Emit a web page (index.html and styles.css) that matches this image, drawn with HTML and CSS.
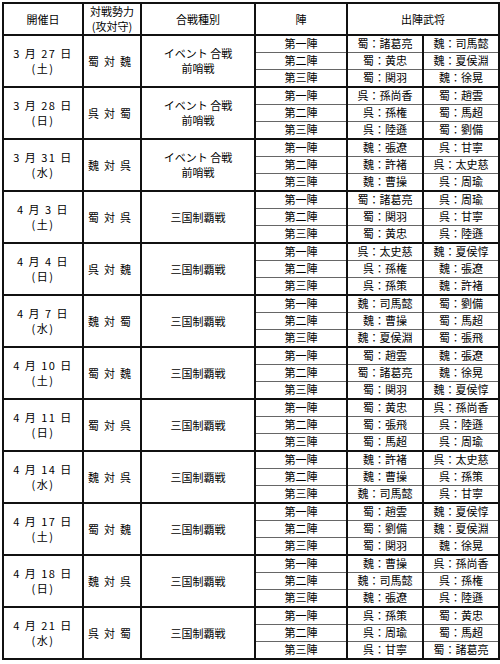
FILE: index.html
```html
<!DOCTYPE html>
<html lang="ja">
<head>
<meta charset="utf-8">
<title>出陣表</title>
<link rel="stylesheet" href="styles.css">
</head>
<body>
<table class="sched">
<colgroup><col class="c1"><col class="c2"><col class="c3"><col class="c4"><col class="c5"><col class="c6"></colgroup>
<thead>
<tr class="head"><th>開催日</th><th>対戦勢力<br>(攻対守)</th><th>合戦種別</th><th>陣</th><th colspan="2">出陣武将</th></tr>
</thead>
<tbody>
<tr class="r1"><td rowspan="3" class="date">3 月 27 日<br>(土)</td><td rowspan="3" class="vs">蜀対魏</td><td rowspan="3" class="kind">イベント 合戦<br>前哨戦</td><td class="jin">第一陣</td><td class="nm">蜀：諸葛亮</td><td class="nm">魏：司馬懿</td></tr>
<tr class="r2"><td class="jin">第二陣</td><td class="nm">蜀：黄忠</td><td class="nm">魏：夏侯淵</td></tr>
<tr class="r3"><td class="jin">第三陣</td><td class="nm">蜀：関羽</td><td class="nm">魏：徐晃</td></tr>

<tr class="r1"><td rowspan="3" class="date">3 月 28 日<br>(日)</td><td rowspan="3" class="vs">呉対蜀</td><td rowspan="3" class="kind">イベント 合戦<br>前哨戦</td><td class="jin">第一陣</td><td class="nm">呉：孫尚香</td><td class="nm">蜀：趙雲</td></tr>
<tr class="r2"><td class="jin">第二陣</td><td class="nm">呉：孫権</td><td class="nm">蜀：馬超</td></tr>
<tr class="r3"><td class="jin">第三陣</td><td class="nm">呉：陸遜</td><td class="nm">蜀：劉備</td></tr>

<tr class="r1"><td rowspan="3" class="date">3 月 31 日<br>(水)</td><td rowspan="3" class="vs">魏対呉</td><td rowspan="3" class="kind">イベント 合戦<br>前哨戦</td><td class="jin">第一陣</td><td class="nm">魏：張遼</td><td class="nm">呉：甘寧</td></tr>
<tr class="r2"><td class="jin">第二陣</td><td class="nm">魏：許褚</td><td class="nm">呉：太史慈</td></tr>
<tr class="r3"><td class="jin">第三陣</td><td class="nm">魏：曹操</td><td class="nm">呉：周瑜</td></tr>

<tr class="r1"><td rowspan="3" class="date">4 月 3 日<br>(土)</td><td rowspan="3" class="vs">蜀対呉</td><td rowspan="3" class="kind">三国制覇戦</td><td class="jin">第一陣</td><td class="nm">蜀：諸葛亮</td><td class="nm">呉：周瑜</td></tr>
<tr class="r2"><td class="jin">第二陣</td><td class="nm">蜀：関羽</td><td class="nm">呉：甘寧</td></tr>
<tr class="r3"><td class="jin">第三陣</td><td class="nm">蜀：黄忠</td><td class="nm">呉：陸遜</td></tr>

<tr class="r1"><td rowspan="3" class="date">4 月 4 日<br>(日)</td><td rowspan="3" class="vs">呉対魏</td><td rowspan="3" class="kind">三国制覇戦</td><td class="jin">第一陣</td><td class="nm">呉：太史慈</td><td class="nm">魏：夏侯惇</td></tr>
<tr class="r2"><td class="jin">第二陣</td><td class="nm">呉：孫権</td><td class="nm">魏：張遼</td></tr>
<tr class="r3"><td class="jin">第三陣</td><td class="nm">呉：孫策</td><td class="nm">魏：許褚</td></tr>

<tr class="r1"><td rowspan="3" class="date">4 月 7 日<br>(水)</td><td rowspan="3" class="vs">魏対蜀</td><td rowspan="3" class="kind">三国制覇戦</td><td class="jin">第一陣</td><td class="nm">魏：司馬懿</td><td class="nm">蜀：劉備</td></tr>
<tr class="r2"><td class="jin">第二陣</td><td class="nm">魏：曹操</td><td class="nm">蜀：馬超</td></tr>
<tr class="r3"><td class="jin">第三陣</td><td class="nm">魏：夏侯淵</td><td class="nm">蜀：張飛</td></tr>

<tr class="r1"><td rowspan="3" class="date">4 月 10 日<br>(土)</td><td rowspan="3" class="vs">蜀対魏</td><td rowspan="3" class="kind">三国制覇戦</td><td class="jin">第一陣</td><td class="nm">蜀：趙雲</td><td class="nm">魏：張遼</td></tr>
<tr class="r2"><td class="jin">第二陣</td><td class="nm">蜀：諸葛亮</td><td class="nm">魏：徐晃</td></tr>
<tr class="r3"><td class="jin">第三陣</td><td class="nm">蜀：関羽</td><td class="nm">魏：夏侯惇</td></tr>

<tr class="r1"><td rowspan="3" class="date">4 月 11 日<br>(日)</td><td rowspan="3" class="vs">蜀対呉</td><td rowspan="3" class="kind">三国制覇戦</td><td class="jin">第一陣</td><td class="nm">蜀：黄忠</td><td class="nm">呉：孫尚香</td></tr>
<tr class="r2"><td class="jin">第二陣</td><td class="nm">蜀：張飛</td><td class="nm">呉：陸遜</td></tr>
<tr class="r3"><td class="jin">第三陣</td><td class="nm">蜀：馬超</td><td class="nm">呉：周瑜</td></tr>

<tr class="r1"><td rowspan="3" class="date">4 月 14 日<br>(水)</td><td rowspan="3" class="vs">魏対呉</td><td rowspan="3" class="kind">三国制覇戦</td><td class="jin">第一陣</td><td class="nm">魏：許褚</td><td class="nm">呉：太史慈</td></tr>
<tr class="r2"><td class="jin">第二陣</td><td class="nm">魏：曹操</td><td class="nm">呉：孫策</td></tr>
<tr class="r3"><td class="jin">第三陣</td><td class="nm">魏：司馬懿</td><td class="nm">呉：甘寧</td></tr>

<tr class="r1"><td rowspan="3" class="date">4 月 17 日<br>(土)</td><td rowspan="3" class="vs">蜀対魏</td><td rowspan="3" class="kind">三国制覇戦</td><td class="jin">第一陣</td><td class="nm">蜀：趙雲</td><td class="nm">魏：夏侯惇</td></tr>
<tr class="r2"><td class="jin">第二陣</td><td class="nm">蜀：劉備</td><td class="nm">魏：夏侯淵</td></tr>
<tr class="r3"><td class="jin">第三陣</td><td class="nm">蜀：関羽</td><td class="nm">魏：徐晃</td></tr>

<tr class="r1"><td rowspan="3" class="date">4 月 18 日<br>(日)</td><td rowspan="3" class="vs">魏対呉</td><td rowspan="3" class="kind">三国制覇戦</td><td class="jin">第一陣</td><td class="nm">魏：曹操</td><td class="nm">呉：孫尚香</td></tr>
<tr class="r2"><td class="jin">第二陣</td><td class="nm">魏：司馬懿</td><td class="nm">呉：孫権</td></tr>
<tr class="r3"><td class="jin">第三陣</td><td class="nm">魏：張遼</td><td class="nm">呉：陸遜</td></tr>

<tr class="r1"><td rowspan="3" class="date">4 月 21 日<br>(水)</td><td rowspan="3" class="vs">呉対蜀</td><td rowspan="3" class="kind">三国制覇戦</td><td class="jin">第一陣</td><td class="nm">呉：孫策</td><td class="nm">蜀：黄忠</td></tr>
<tr class="r2"><td class="jin">第二陣</td><td class="nm">呉：周瑜</td><td class="nm">蜀：馬超</td></tr>
<tr class="r3"><td class="jin">第三陣</td><td class="nm">呉：甘寧</td><td class="nm">蜀：諸葛亮</td></tr>
</tbody>
</table>
</body>
</html>
```
FILE: styles.css
```css
html, body {
  margin: 0;
  padding: 0;
  background: #fff;
}
body {
  padding: 2px 0 0 2px;
  font-family: "Noto Sans CJK JP", "Noto Sans", sans-serif;
  font-size: 11px;
  color: #000;
}
.sched {
  border-collapse: collapse;
  table-layout: fixed;
  width: 496px;
}
.c1 { width: 80px; }
.c2 { width: 58px; }
.c3 { width: 114px; }
.c4 { width: 92px; }
.c5 { width: 76px; }
.c6 { width: 76px; }
.sched th,
.sched td {
  border: 2px solid #111;
  padding: 0;
  font-weight: normal;
  text-align: center;
  vertical-align: middle;
  line-height: 15px;
  white-space: nowrap;
  overflow: hidden;
}
.head { height: 32px; }
.head th { line-height: 15px; }
.r1, .r2 { height: 17px; }
.r3 { height: 18px; }
.r1 .jin, .r1 .nm,
.r2 .jin, .r2 .nm { border-bottom: 1px solid #666; }
.r2 td, .r3 td { border-top: 1px solid #666; }
.date { line-height: 17px; letter-spacing: 1.5px; }
.vs { letter-spacing: 5px; padding-left: 5px; }
.kind { line-height: 17px; }
.nm {
  text-align: left;
  padding-left: 3px;
}
```
